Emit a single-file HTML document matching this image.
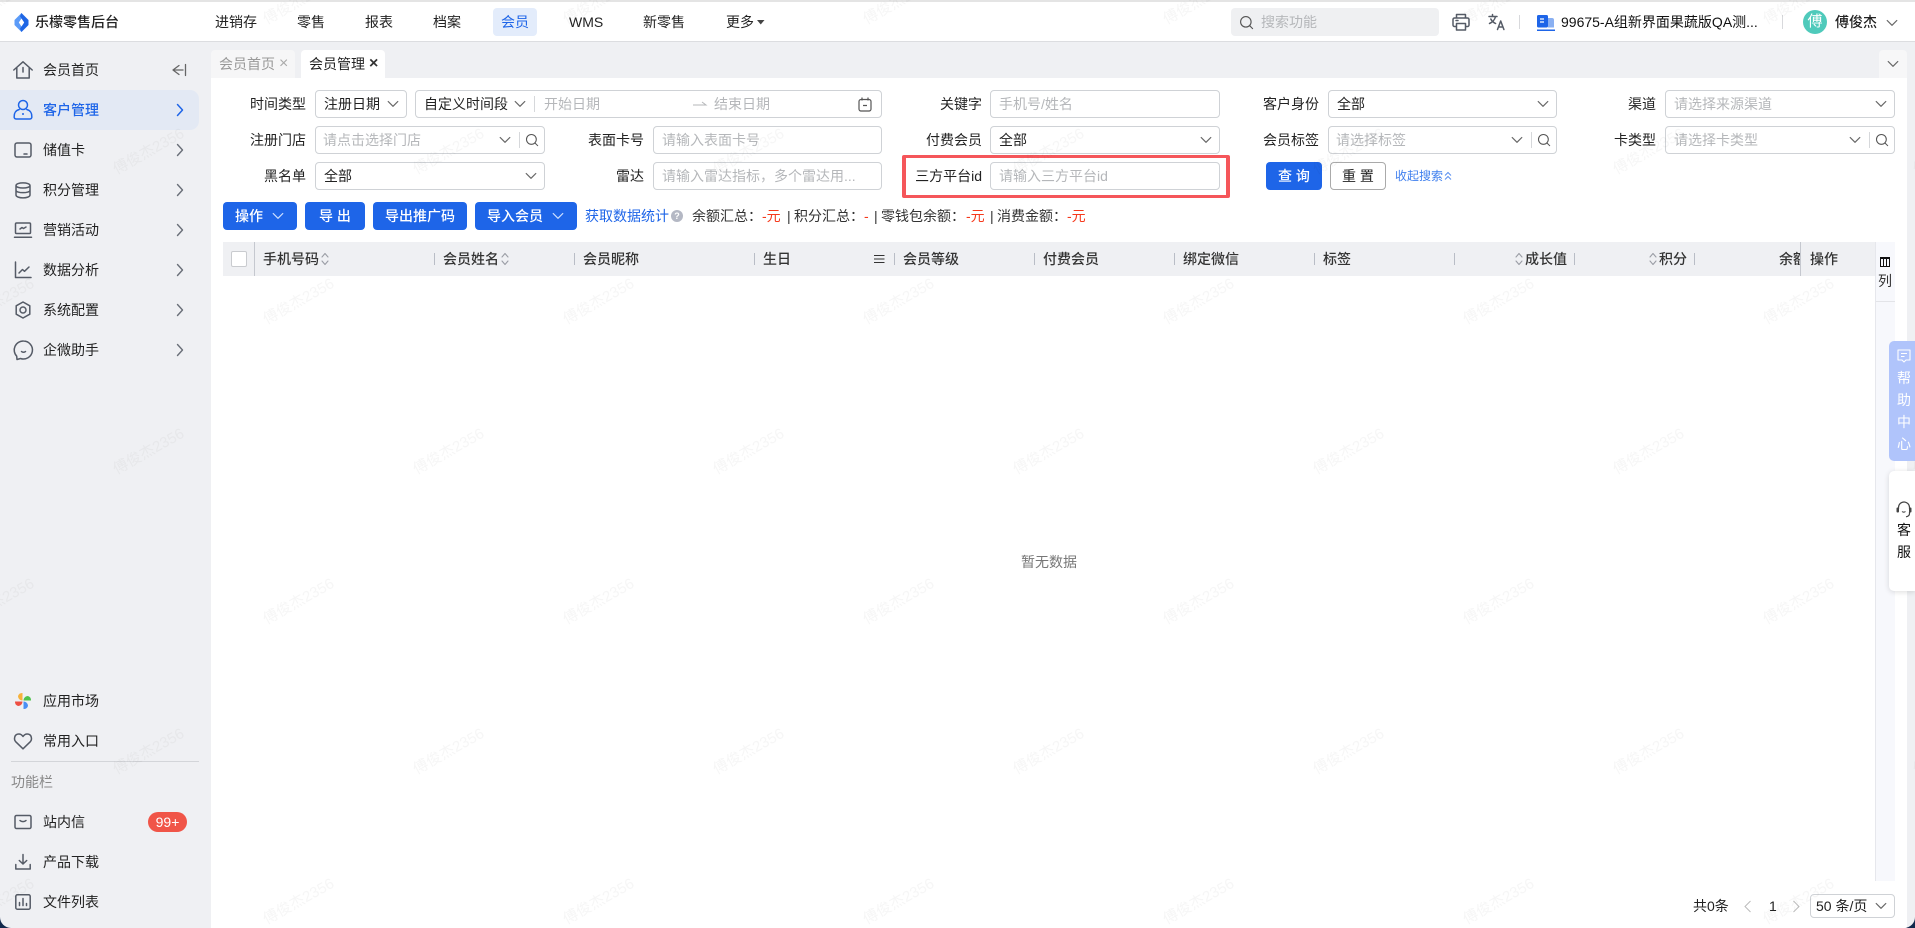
<!DOCTYPE html>
<html lang="zh-CN"><head><meta charset="utf-8"><title>乐檬零售后台</title>
<style>
*{box-sizing:border-box}
html,body{margin:0;padding:0;width:1915px;height:928px;overflow:hidden;background:#12294d}
body{font-family:"Liberation Sans","Noto Sans CJK SC",sans-serif;font-size:14px;color:#222}
#app{position:absolute;left:0;top:0;width:1915px;height:928px;background:#eff0f3;border-radius:0 0 11px 11px;overflow:hidden}
.t{position:absolute;line-height:20px;height:20px;white-space:nowrap}
.b{position:absolute}
.l{position:absolute;line-height:20px;width:100px;text-align:right;white-space:nowrap;color:#222}
.box{position:absolute;background:#fff;border:1px solid #cfd2d6;border-radius:4px;height:28px}
.ph{color:#b5b7ba}
svg{position:absolute;overflow:visible}
.btn{position:absolute;height:28px;top:202px;background:#1e65e8;color:#fff;border-radius:4px;line-height:28px;text-align:center;font-weight:500}
.th{position:absolute;top:249px;line-height:20px;color:#333;font-weight:500;white-space:nowrap}
.dv{position:absolute;top:253px;width:1px;height:12px;background:#b9bdc6}
.s{fill:none;stroke:#555b66;stroke-width:1.5;stroke-linecap:round;stroke-linejoin:round}
.sb{stroke:#1e65e8}
.red{color:#f5391c}
</style></head><body>
<svg width="0" height="0" style="position:absolute"><defs>
<symbol id="cd" viewBox="0 0 12 8"><path d="M1.2 1.5 6 6.3l4.8-4.8" fill="none" stroke="#666" stroke-width="1.2" stroke-linecap="round" stroke-linejoin="round"/></symbol>
<symbol id="cdw" viewBox="0 0 12 8"><path d="M1.2 1.5 6 6.3l4.8-4.8" fill="none" stroke="#cfe0ff" stroke-width="1.2" stroke-linecap="round" stroke-linejoin="round"/></symbol>
<symbol id="cr" viewBox="0 0 8 14"><path d="M1.5 1.5 6.5 7l-5 5.5" fill="none" stroke="#6a6f78" stroke-width="1.4" stroke-linecap="round" stroke-linejoin="round"/></symbol>
<symbol id="sr" viewBox="0 0 16 16"><circle cx="7.3" cy="7.3" r="5.6" fill="none" stroke="#555" stroke-width="1.2"/><path d="M11.4 11.4 14.5 14.5" stroke="#555" stroke-width="1.2" stroke-linecap="round"/></symbol>
<symbol id="so" viewBox="0 0 8 16"><path d="M1 6 4 2.5 7 6M1 10l3 3.5L7 10" fill="none" stroke="#9a9da5" stroke-width="1.1" stroke-linecap="round" stroke-linejoin="round"/></symbol>
</defs></svg>
<div id="app">
<!-- header -->
<div class="b" style="left:0;top:0;width:1915px;height:42px;background:#fff;border-top:2px solid #e4e4e4;border-bottom:1px solid #dcdde0"></div>
<svg style="left:14px;top:13px" width="15" height="19" viewBox="0 0 15 19"><path d="M7.500 0 9 3.200 4.800 9.500 9 15.800 7.500 19 .5 12V7Z" fill="#5b9bf8"/><path d="M7.500 0 14.500 7V12L7.500 19 6 15.800 10.200 9.500 6 3.200Z" fill="#1f66e5"/></svg>
<div class="t" style="left:35px;top:12px;font-weight:500;color:#222">乐檬零售后台</div>
<div class="t" style="left:215px;top:12px">进销存</div>
<div class="t" style="left:297px;top:12px">零售</div>
<div class="t" style="left:365px;top:12px">报表</div>
<div class="t" style="left:433px;top:12px">档案</div>
<div class="b" style="left:493px;top:8px;width:44px;height:28px;background:#e3ecfb;border-radius:4px"></div>
<div class="t" style="left:501px;top:12px;color:#1e65e8">会员</div>
<div class="t" style="left:569px;top:12px">WMS</div>
<div class="t" style="left:643px;top:12px">新零售</div>
<div class="t" style="left:726px;top:12px">更多</div>
<svg style="left:757px;top:20px" width="8" height="5" viewBox="0 0 8 5"><path d="M0 0h7.500L3.750 4.500Z" fill="#444"/></svg>
<div class="b" style="left:1231px;top:8px;width:208px;height:28px;background:#eff0f2;border-radius:4px"></div>
<svg style="left:1239px;top:15px" width="15" height="15"><use href="#sr"/></svg>
<div class="t ph" style="left:1261px;top:12px">搜索功能</div>
<svg style="left:1451px;top:12px" width="20" height="20" viewBox="0 0 20 20"><path class="s" d="M5.500 6V2.500h9V6M5 14.500H3.500a1.500 1.500 0 0 1-1.500-1.500V7.500A1.500 1.500 0 0 1 3.500 6h13A1.500 1.500 0 0 1 18 7.500V13a1.500 1.500 0 0 1-1.500 1.500H15M5.500 11.500h9V18h-9ZM5 8.500h2"/></svg>
<svg style="left:1488px;top:13px" width="18" height="18" viewBox="0 0 18 18"><path class="s" stroke-width="1.300" d="M1 3.500h8M4.500 1.500v2M7.500 3.500C6.800 7 4 9.500 1.500 10.500M2.800 6c1 2 3 3.700 4.800 4.500M9.500 16.500l3.200-8.500 3.200 8.500M10.600 14h4.200"/></svg>
<div class="b" style="left:1519px;top:15px;width:1px;height:14px;background:#d8d9dc"></div>
<svg style="left:1537px;top:14px" width="18" height="17" viewBox="0 0 18 17"><rect x="0" y="1" width="11" height="12.500" rx="1.500" fill="#1e65e8"/><path d="M11 4h4a2 2 0 0 1 2 2v7.500h-6Z" fill="#8ab0f2"/><path d="M0 15.500h18v1.500H0Z" fill="#1e65e8"/><path d="M3 5h4M3 8h4" stroke="#fff" stroke-width="1.300"/></svg>
<div class="t" style="left:1561px;top:12px;color:#111">99675-A组新界面果蔬版QA测...</div>
<div class="b" style="left:1782px;top:15px;width:1px;height:14px;background:#d8d9dc"></div>
<div class="b" style="left:1803px;top:10px;width:24px;height:24px;border-radius:50%;background:#4fcabb;color:#fff;text-align:center;line-height:24px;font-size:15px">傅</div>
<div class="t" style="left:1835px;top:12px;font-weight:500">傅俊杰</div>
<svg style="left:1886px;top:19px" width="12" height="8"><use href="#cd"/></svg>

<!-- sidebar -->
<svg style="left:13px;top:60px" width="20" height="20" viewBox="0 0 20 20"><path class="s" d="M.8 10 10 1.800 19.200 10M3.800 8V18H16.200V8M10 7.500v4.500"/></svg>
<div class="t" style="left:43px;top:60px">会员首页</div>
<svg style="left:171px;top:63px" width="16" height="14" viewBox="0 0 16 14"><path d="M8 2.500 2 7l6 4.500M2 7h10M14.500 1.500v11" fill="none" stroke="#666" stroke-width="1.300" stroke-linecap="round" stroke-linejoin="round"/></svg>
<div class="b" style="left:0;top:90px;width:199px;height:40px;background:#e3e9f4;border-radius:0 9px 9px 0"></div>
<svg style="left:13px;top:99px" width="20" height="22" viewBox="0 0 20 22"><circle cx="10" cy="6" r="4.500" class="s sb"/><path class="s sb" d="M6.200 10.500C2.500 11.500 1 14.500 1.200 17.500a2 2 0 0 0 2 2.500h13.600a2 2 0 0 0 2-2.500c.2-3-1.300-6-5-7"/><circle cx="10" cy="15" r="1" fill="#1e65e8"/></svg>
<div class="t" style="left:43px;top:100px;color:#1e65e8;font-weight:500">客户管理</div>
<svg style="left:176px;top:103px" width="8" height="14" viewBox="0 0 8 14"><path d="M1.500 1.500 6.500 7l-5 5.500" fill="none" stroke="#1e65e8" stroke-width="1.500" stroke-linecap="round" stroke-linejoin="round"/></svg>
<svg style="left:13px;top:140px" width="20" height="20" viewBox="0 0 20 20"><rect x="2" y="3" width="16" height="14" rx="2" class="s"/><path class="s" d="M11 14h3"/></svg>
<div class="t" style="left:43px;top:140px">储值卡</div>
<svg style="left:176px;top:143px" width="8" height="14"><use href="#cr"/></svg>
<svg style="left:13px;top:180px" width="20" height="20" viewBox="0 0 20 20"><path class="s" d="M3 5.500C3 2 17 2 17 5.500V15C17 18.800 3 18.800 3 15ZM3 5.500c0 3.300 14 3.300 14 0M3 10.200c0 3.300 14 3.300 14 0"/></svg>
<div class="t" style="left:43px;top:180px">积分管理</div>
<svg style="left:176px;top:183px" width="8" height="14"><use href="#cr"/></svg>
<svg style="left:13px;top:220px" width="20" height="20" viewBox="0 0 20 20"><rect x="2.500" y="3" width="15" height="10.500" rx="1" class="s"/><path class="s" d="M1.500 17.200h17M7 9l2-1.500 1.500 1 2.500-1.500"/></svg>
<div class="t" style="left:43px;top:220px">营销活动</div>
<svg style="left:176px;top:223px" width="8" height="14"><use href="#cr"/></svg>
<svg style="left:13px;top:260px" width="20" height="20" viewBox="0 0 20 20"><path class="s" d="M2.500 2V17.500H18M6 13l3.500-3.500 2 1.800L16 7"/></svg>
<div class="t" style="left:43px;top:260px">数据分析</div>
<svg style="left:176px;top:263px" width="8" height="14"><use href="#cr"/></svg>
<svg style="left:13px;top:300px" width="20" height="20" viewBox="0 0 20 20"><path class="s" d="M10 2 16.800 5.800V14.200L10 18 3.200 14.200V5.800Z"/><circle cx="10" cy="10" r="3" class="s"/></svg>
<div class="t" style="left:43px;top:300px">系统配置</div>
<svg style="left:176px;top:303px" width="8" height="14"><use href="#cr"/></svg>
<svg style="left:13px;top:340px" width="20" height="20" viewBox="0 0 20 20"><path class="s" d="M10.500 1a9 9 0 1 1-3 17.500L4 19.500l-.3-3.300A9 9 0 0 1 10.500 1Z"/><path class="s" d="M8.500 11.500c1 1 3 1 4 0"/></svg>
<div class="t" style="left:43px;top:340px">企微助手</div>
<svg style="left:176px;top:343px" width="8" height="14"><use href="#cr"/></svg>

<svg style="left:14px;top:692px" width="18" height="18" viewBox="0 0 18 18"><path d="M8.500 8.500V1A4.500 4.500 0 0 0 4 4c0 2.500 2 4.500 4.500 4.500Z" fill="#f6b23c"/><path d="M9.500 8.500H17A4.500 4.500 0 0 0 14 4c-2.500 0-4.500 2-4.500 4.500Z" fill="#4ec24c"/><path d="M9.500 9.500V17a4.500 4.500 0 0 0 4.500-3c0-2.500-2-4.500-4.500-4.500Z" fill="#4a8ff5"/><path d="M8.500 9.500H1A4.500 4.500 0 0 0 4 14c2.500 0 4.500-2 4.500-4.500Z" fill="#ee4f43"/></svg>
<div class="t" style="left:43px;top:691px">应用市场</div>
<svg style="left:13px;top:731px" width="20" height="20" viewBox="0 0 20 20"><path class="s" d="M10 17.800 2.800 10.800C.6 8.500 1.200 3 5.800 3 8 3 9.200 4.300 10 5.500 10.800 4.300 12 3 14.200 3c4.600 0 5.200 5.500 3 7.800Z"/></svg>
<div class="t" style="left:43px;top:731px">常用入口</div>
<div class="b" style="left:11px;top:761px;width:188px;height:1px;background:#d3d5d9"></div>
<div class="t" style="left:11px;top:772px;color:#888">功能栏</div>
<svg style="left:13px;top:812px" width="20" height="20" viewBox="0 0 20 20"><rect x="2" y="3.500" width="16" height="13" rx="1.500" class="s"/><path class="s" d="M7 8.500c1.500 1.500 4.500 1.500 6 0"/></svg>
<div class="t" style="left:43px;top:812px">站内信</div>
<div class="b" style="left:148px;top:812px;width:39px;height:20px;border-radius:10px;background:#f05548;color:#fff;text-align:center;line-height:20px">99+</div>
<svg style="left:13px;top:852px" width="20" height="20" viewBox="0 0 20 20"><path class="s" d="M10 2.500V12M6.300 8.500 10 12l3.700-3.500M2.800 12.500V17h14.400v-4.500"/></svg>
<div class="t" style="left:43px;top:852px">产品下载</div>
<svg style="left:13px;top:892px" width="20" height="20" viewBox="0 0 20 20"><rect x="2.800" y="2.800" width="14.400" height="14.400" rx="1.500" class="s"/><path class="s" d="M6.500 13.500v-3M10 13.500V6.500M13.500 13.500v-2"/></svg>
<div class="t" style="left:43px;top:892px">文件列表</div>

<!-- tabs -->
<div class="b" style="left:211px;top:50px;width:84px;height:28px;background:#f6f6f7;border-radius:4px 4px 0 0"></div>
<div class="t" style="left:219px;top:54px;color:#999">会员首页</div>
<div class="t" style="left:279px;top:54px;color:#aaa;font-size:16px">×</div>
<div class="b" style="left:301px;top:50px;width:84px;height:29px;background:#fff;border-radius:4px 4px 0 0"></div>
<div class="t" style="left:309px;top:54px">会员管理</div>
<div class="t" style="left:369px;top:54px;font-size:16px;font-weight:700;color:#333">×</div>
<div class="b" style="left:1879px;top:50px;width:28px;height:28px;background:#f7f7f8;border-radius:4px 4px 0 0"></div>
<svg style="left:1887px;top:60px" width="12" height="8"><use href="#cd"/></svg>

<!-- content -->
<div class="b" style="left:211px;top:78px;width:1696px;height:850px;background:#fff"></div>

<!-- form row 1 -->
<div class="l" style="left:206px;top:94px">时间类型</div>
<div class="box" style="left:315px;top:90px;width:92px"></div>
<div class="t" style="left:324px;top:94px">注册日期</div>
<svg style="left:387px;top:100px" width="12" height="8"><use href="#cd"/></svg>
<div class="box" style="left:415px;top:90px;width:467px"></div>
<div class="t" style="left:424px;top:94px">自定义时间段</div>
<svg style="left:514px;top:100px" width="12" height="8"><use href="#cd"/></svg>
<div class="b" style="left:534px;top:96px;width:1px;height:16px;background:#d6d8db"></div>
<div class="t ph" style="left:544px;top:94px">开始日期</div>
<svg style="left:693px;top:101px" width="14" height="6" viewBox="0 0 14 6"><path d="M0 4h13L9 1" fill="none" stroke="#b5b7ba" stroke-width="1"/></svg>
<div class="t ph" style="left:714px;top:94px">结束日期</div>
<svg style="left:858px;top:97px" width="14" height="15" viewBox="0 0 14 15"><rect x="1" y="2.500" width="12" height="11.500" rx="2" fill="none" stroke="#555" stroke-width="1.200"/><path d="M4 .5v3M10 .5v3M5 8.500h4" stroke="#555" stroke-width="1.200" fill="none"/></svg>
<div class="l" style="left:882px;top:94px">关键字</div>
<div class="box" style="left:990px;top:90px;width:230px"></div>
<div class="t ph" style="left:999px;top:94px">手机号/姓名</div>
<div class="l" style="left:1219px;top:94px">客户身份</div>
<div class="box" style="left:1328px;top:90px;width:229px"></div>
<div class="t" style="left:1337px;top:94px">全部</div>
<svg style="left:1537px;top:100px" width="12" height="8"><use href="#cd"/></svg>
<div class="l" style="left:1556px;top:94px">渠道</div>
<div class="box" style="left:1665px;top:90px;width:230px"></div>
<div class="t ph" style="left:1674px;top:94px">请选择来源渠道</div>
<svg style="left:1875px;top:100px" width="12" height="8"><use href="#cd"/></svg>

<!-- form row 2 -->
<div class="l" style="left:206px;top:130px">注册门店</div>
<div class="box" style="left:315px;top:126px;width:230px"></div>
<div class="t ph" style="left:323px;top:130px">请点击选择门店</div>
<svg style="left:499px;top:136px" width="12" height="8"><use href="#cd"/></svg>
<div class="b" style="left:519px;top:132px;width:1px;height:16px;background:#d6d8db"></div>
<svg style="left:525px;top:133px" width="14" height="14"><use href="#sr"/></svg>
<div class="l" style="left:544px;top:130px">表面卡号</div>
<div class="box" style="left:653px;top:126px;width:229px"></div>
<div class="t ph" style="left:662px;top:130px">请输入表面卡号</div>
<div class="l" style="left:882px;top:130px">付费会员</div>
<div class="box" style="left:990px;top:126px;width:230px"></div>
<div class="t" style="left:999px;top:130px">全部</div>
<svg style="left:1200px;top:136px" width="12" height="8"><use href="#cd"/></svg>
<div class="l" style="left:1219px;top:130px">会员标签</div>
<div class="box" style="left:1328px;top:126px;width:229px"></div>
<div class="t ph" style="left:1336px;top:130px">请选择标签</div>
<svg style="left:1511px;top:136px" width="12" height="8"><use href="#cd"/></svg>
<div class="b" style="left:1531px;top:132px;width:1px;height:16px;background:#d6d8db"></div>
<svg style="left:1537px;top:133px" width="14" height="14"><use href="#sr"/></svg>
<div class="l" style="left:1556px;top:130px">卡类型</div>
<div class="box" style="left:1665px;top:126px;width:230px"></div>
<div class="t ph" style="left:1674px;top:130px">请选择卡类型</div>
<svg style="left:1849px;top:136px" width="12" height="8"><use href="#cd"/></svg>
<div class="b" style="left:1869px;top:132px;width:1px;height:16px;background:#d6d8db"></div>
<svg style="left:1875px;top:133px" width="14" height="14"><use href="#sr"/></svg>

<!-- form row 3 -->
<div class="l" style="left:206px;top:166px">黑名单</div>
<div class="box" style="left:315px;top:162px;width:230px"></div>
<div class="t" style="left:324px;top:166px">全部</div>
<svg style="left:525px;top:172px" width="12" height="8"><use href="#cd"/></svg>
<div class="l" style="left:544px;top:166px">雷达</div>
<div class="box" style="left:653px;top:162px;width:229px"></div>
<div class="t ph" style="left:662px;top:166px">请输入雷达指标，多个雷达用...</div>
<div class="b" style="left:902px;top:155px;width:328px;height:43px;border:3px solid #f5565a;border-left-width:4px;border-right-width:4px;border-radius:2px"></div>
<div class="l" style="left:882px;top:166px">三方平台id</div>
<div class="box" style="left:990px;top:162px;width:230px"></div>
<div class="t ph" style="left:999px;top:166px">请输入三方平台id</div>
<div class="btn" style="left:1266px;top:162px;width:56px">查 询</div>
<div class="box" style="left:1330px;top:162px;width:56px;text-align:center;line-height:26px;border-color:#aaa">重 置</div>
<div class="t" style="left:1395px;top:166px;color:#3f7fee;font-size:12px;letter-spacing:0">收起搜索</div>
<svg style="left:1444px;top:170px" width="8" height="12" viewBox="0 0 8 12"><path d="M1 5.500 4 2.500l3 3M1 9.500l3-3 3 3" fill="none" stroke="#5a8ff0" stroke-width="1"/></svg>

<!-- buttons -->
<div class="btn" style="left:223px;width:74px;text-align:left;padding-left:12px">操作</div>
<svg style="left:272px;top:212px" width="12" height="8"><use href="#cdw"/></svg>
<div class="btn" style="left:305px;width:60px">导 出</div>
<div class="btn" style="left:373px;width:94px">导出推广码</div>
<div class="btn" style="left:475px;width:102px;text-align:left;padding-left:12px">导入会员</div>
<svg style="left:552px;top:212px" width="12" height="8"><use href="#cdw"/></svg>
<div class="t" style="left:585px;top:206px;color:#1e65e8">获取数据统计</div>
<div class="b" style="left:671px;top:210px;width:12px;height:12px;border-radius:50%;background:#b4b8c4;color:#fff;font-size:9px;line-height:12px;text-align:center;font-weight:700">?</div>
<div class="t" style="left:692px;top:206px;color:#333">余额汇总：</div>
<div class="t red" style="left:762px;top:206px">-元</div>
<div class="t" style="left:787px;top:206px;color:#333">|</div>
<div class="t" style="left:794px;top:206px;color:#333">积分汇总：</div>
<div class="t red" style="left:864px;top:206px">-</div>
<div class="t" style="left:874px;top:206px;color:#333">|</div>
<div class="t" style="left:881px;top:206px;color:#333">零钱包余额：</div>
<div class="t red" style="left:966px;top:206px">-元</div>
<div class="t" style="left:990px;top:206px;color:#333">|</div>
<div class="t" style="left:997px;top:206px;color:#333">消费金额：</div>
<div class="t red" style="left:1067px;top:206px">-元</div>

<!-- table header -->
<div class="b" style="left:223px;top:242px;width:1652px;height:34px;background:#eff0f3"></div>
<div class="b" style="left:231px;top:251px;width:16px;height:16px;background:#fff;border:1.500px solid #c9cbcf;border-radius:2px"></div>
<div class="b" style="left:254px;top:242px;width:1px;height:34px;background:#c5c8cf"></div>
<div class="th" style="left:263px">手机号码</div>
<svg style="left:321px;top:251px" width="8" height="16"><use href="#so"/></svg>
<div class="dv" style="left:434px"></div>
<div class="th" style="left:443px">会员姓名</div>
<svg style="left:501px;top:251px" width="8" height="16"><use href="#so"/></svg>
<div class="dv" style="left:574px"></div>
<div class="th" style="left:583px">会员昵称</div>
<div class="dv" style="left:754px"></div>
<div class="th" style="left:763px">生日</div>
<svg style="left:874px;top:254px" width="11" height="10" viewBox="0 0 11 10"><path d="M0 1.500h10.500M0 5h10.500M0 8.500h10.500" stroke="#333" stroke-width="1"/></svg>
<div class="dv" style="left:894px"></div>
<div class="th" style="left:903px">会员等级</div>
<div class="dv" style="left:1034px"></div>
<div class="th" style="left:1043px">付费会员</div>
<div class="dv" style="left:1174px"></div>
<div class="th" style="left:1183px">绑定微信</div>
<div class="dv" style="left:1314px"></div>
<div class="th" style="left:1323px">标签</div>
<div class="dv" style="left:1454px"></div>
<svg style="left:1515px;top:251px" width="8" height="16"><use href="#so"/></svg>
<div class="th" style="left:1525px">成长值</div>
<div class="dv" style="left:1574px"></div>
<svg style="left:1649px;top:251px" width="8" height="16"><use href="#so"/></svg>
<div class="th" style="left:1659px">积分</div>
<div class="dv" style="left:1694px"></div>
<div class="b" style="left:1779px;top:242px;width:21px;height:34px;overflow:hidden"><div class="th" style="left:0;top:7px">余额</div></div>
<div class="b" style="left:1800px;top:242px;width:1px;height:34px;background:#c5c8cf"></div>
<div class="th" style="left:1810px">操作</div>

<!-- column panel -->
<div class="b" style="left:1875px;top:242px;width:20px;height:639px;background:#f7f8fc;border-left:1px solid #e6e7ec"></div>
<div class="b" style="left:1876px;top:301px;width:19px;height:1px;background:#e3e4e8"></div>
<svg style="left:1880px;top:257px" width="10" height="10" viewBox="0 0 10 10"><path d="M.5.500h9v9h-9ZM3.500 1v8M6.500 1v8M0 1.500h10" fill="none" stroke="#111" stroke-width="1"/></svg>
<div class="t" style="left:1878px;top:271px;color:#333">列</div>

<!-- empty -->
<div class="t" style="left:1021px;top:552px;color:#777">暂无数据</div>

<!-- help -->
<div class="b" style="left:1889px;top:341px;width:26px;height:120px;background:#b0c4fb;border-radius:5px 0 0 5px"></div>
<svg style="left:1897px;top:349px" width="14" height="14" viewBox="0 0 14 14"><path d="M1 1h12v10H9l-2 2-2-2H1Z" fill="none" stroke="#fff" stroke-width="1.100" stroke-linejoin="round"/><path d="M4 4.500h6M4 7.500h3.500" stroke="#fff" stroke-width="1.100"/></svg>
<div class="t" style="left:1897px;top:368px;color:#fff">帮</div>
<div class="t" style="left:1897px;top:390px;color:#fff">助</div>
<div class="t" style="left:1897px;top:412px;color:#fff">中</div>
<div class="t" style="left:1897px;top:434px;color:#fff">心</div>
<div class="b" style="left:1889px;top:471px;width:26px;height:120px;background:#fff;border-radius:5px 0 0 5px;box-shadow:0 1px 6px rgba(0,0,0,.14)"></div>
<svg style="left:1896px;top:501px" width="16" height="17" viewBox="0 0 16 17"><path d="M2.500 8V6.500a5.500 5.500 0 0 1 11 0V8M13.500 11v1.500c0 2-1.500 3-3.500 3.300" fill="none" stroke="#444" stroke-width="1.200"/><rect x=".5" y="6.500" width="2.500" height="5" rx="1" fill="#444"/><rect x="13" y="6.500" width="2.500" height="5" rx="1" fill="#444"/><path d="M6 10.500c1 .8 2.500.8 3.500 0" fill="none" stroke="#444" stroke-width="1"/></svg>
<div class="t" style="left:1897px;top:520px;color:#111">客</div>
<div class="t" style="left:1897px;top:542px;color:#111">服</div>

<!-- pagination -->
<div class="t" style="left:1693px;top:896px;color:#222">共0条</div>
<svg style="left:1744px;top:900px" width="8" height="13" viewBox="0 0 8 13"><path d="M6.500 1 1 6.500 6.500 12" fill="none" stroke="#bbb" stroke-width="1"/></svg>
<div class="t" style="left:1769px;top:896px;color:#222">1</div>
<svg style="left:1792px;top:900px" width="8" height="13" viewBox="0 0 8 13"><path d="M1.500 1 7 6.500 1.500 12" fill="none" stroke="#bbb" stroke-width="1"/></svg>
<div class="box" style="left:1810px;top:894px;width:85px;height:24px"></div>
<div class="t" style="left:1816px;top:896px;color:#222">50 条/页</div>
<svg style="left:1875px;top:902px" width="12" height="8"><use href="#cd"/></svg>

<!-- watermark -->
<svg style="left:0;top:0;pointer-events:none" width="1915" height="928">
<defs><pattern id="wm" patternUnits="userSpaceOnUse" width="300" height="300" patternTransform="translate(74 77)">
<text x="75" y="75" transform="rotate(-29 75 75)" text-anchor="middle" dominant-baseline="middle" font-size="15" fill="#000" fill-opacity=".035" font-family="Liberation Sans, Noto Sans CJK SC, sans-serif">傅俊杰2356</text>
<text x="225" y="225" transform="rotate(-29 225 225)" text-anchor="middle" dominant-baseline="middle" font-size="15" fill="#000" fill-opacity=".035" font-family="Liberation Sans, Noto Sans CJK SC, sans-serif">傅俊杰2356</text>
</pattern></defs>
<rect width="1915" height="928" fill="url(#wm)"/>
</svg>
</div>
</body></html>
